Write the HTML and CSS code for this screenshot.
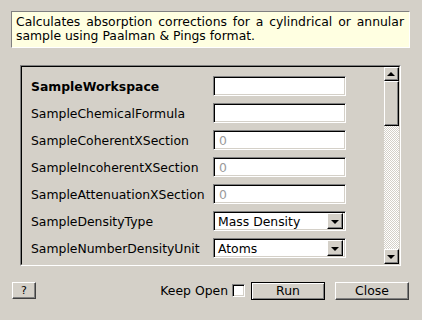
FILE: index.html
```html
<!DOCTYPE html>
<html lang="en">

<head>
    <meta charset="UTF-8">
    <title>CylinderPaalmanPingsCorrection</title>
    <link rel="stylesheet" href="styles.css">
</head>

<body>

    <div class="desc">
        <span class="justified">Calculates absorption corrections for a cylindrical or annular</span>
        <span>sample using Paalman &amp; Pings format.</span>
    </div>

    <div class="panel">
        <div class="panel-inner">
            <div class="props">
                <span class="name bold">SampleWorkspace</span>
                <span class="field"></span>

                <span class="name">SampleChemicalFormula</span>
                <span class="field"></span>

                <span class="name">SampleCoherentXSection</span>
                <span class="field hint">0</span>

                <span class="name">SampleIncoherentXSection</span>
                <span class="field hint">0</span>

                <span class="name">SampleAttenuationXSection</span>
                <span class="field hint">0</span>

                <span class="name">SampleDensityType</span>
                <span class="field combo">Mass Density<span class="drop"></span></span>

                <span class="name">SampleNumberDensityUnit</span>
                <span class="field combo">Atoms<span class="drop"></span></span>

                <span class="name"></span>
                <span class="field"></span>
            </div>

            <div class="scrollbar">
                <div class="sb-btn up"></div>
                <div class="sb-thumb"></div>
                <div class="sb-track"></div>
                <div class="sb-btn down"></div>
            </div>
        </div>
    </div>

    <div class="actions">
        <button class="btn help">?</button>
        <span class="spacer"></span>
        <label class="keep">Keep Open <span class="check"></span></label>
        <button class="btn run">Run</button>
        <button class="btn close">Close</button>
    </div>

</body>

</html>
```

FILE: styles.css
```css
body {
    margin: 0;
    width: 422px;
    height: 320px;
    background: #d4d0c8;
    font-family: "DejaVu Sans", sans-serif;
    font-size: 12.4px;
    color: #000;
    overflow: hidden;
}

.desc {
    display: flex;
    flex-direction: column;
    box-sizing: border-box;
    height: 37px;
    margin: 11px 12px 0 11px;
    padding: 3px 5px 4px 4px;
    line-height: 14px;
    background: #ffffe1;
    border: 1px solid;
    border-color: #808080 #fff #fff #808080;

    .justified {
        text-align: justify;
        text-align-last: justify;
    }
}

.panel {
    box-sizing: border-box;
    height: 201px;
    margin: 17px 21px 0 20px;
    border: 1px solid;
    border-color: #808080 #fff #fff #808080;
}

.panel-inner {
    display: flex;
    height: 100%;
    box-sizing: border-box;
    border: 1px solid;
    border-color: #000 #d4d0c8 #d4d0c8 #000;
}

.props {
    flex: 1;
    overflow: hidden;
    display: grid;
    grid-template-columns: 176px 133px;
    grid-auto-rows: 20px;
    column-gap: 6px;
    row-gap: 7px;
    align-items: center;
    align-content: start;
    padding: 9px 0 0 9px;

    .bold {
        font-weight: bold;
    }
}

.name {
    white-space: nowrap;
}

.field {
    box-sizing: border-box;
    height: 20px;
    display: flex;
    align-items: center;
    padding-left: 4px;
    background: #fff;
    border: 1px solid;
    border-color: #808080 #fff #fff #808080;
    box-shadow: inset 1px 1px 0 #000, inset -1px -1px 0 #d4d0c8;

    &.hint {
        color: #9a9a9a;
        padding-left: 5px;
    }

    &.combo {
        justify-content: space-between;
        padding: 0 2px 0 4px;
    }
}

.drop {
    box-sizing: border-box;
    width: 16px;
    height: 16px;
    display: flex;
    justify-content: center;
    align-items: center;
    background: #d4d0c8;
    border: 1px solid;
    border-color: #fff #000 #000 #fff;
    box-shadow: inset -1px -1px 0 #808080;

    &::after {
        content: "";
        border-left: 4px solid transparent;
        border-right: 4px solid transparent;
        border-top: 4px solid #000;
        margin: 1px 1px 0 0;
    }
}

.scrollbar {
    width: 15px;
    display: flex;
    flex-direction: column;
}

.sb-btn,
.sb-thumb {
    box-sizing: border-box;
    background: #d4d0c8;
    border: 1px solid;
    border-color: #fff #000 #000 #fff;
    box-shadow: inset -1px -1px 0 #808080;
}

.sb-btn {
    height: 14px;
    display: flex;
    justify-content: center;
    align-items: center;

    &::after {
        content: "";
        border-left: 4px solid transparent;
        border-right: 4px solid transparent;
        margin-right: 1px;
    }

    &.up::after {
        border-bottom: 4px solid #000;
    }

    &.down {
        height: 15px;
    }

    &.down::after {
        border-top: 4px solid #000;
    }
}

.sb-thumb {
    height: 45px;
}

.sb-track {
    flex: 1;
    background: repeating-conic-gradient(#fff 0 25%, #d4d0c8 0 50%) 0 0 / 2px 2px;
}

.actions {
    display: flex;
    align-items: center;
    height: 17px;
    margin-top: 16px;
    padding: 0 13px 0 12px;

    .spacer {
        flex: 1;
    }
}

.btn {
    box-sizing: border-box;
    height: 17px;
    padding: 0;
    font: inherit;
    color: #000;
    background: #d4d0c8;
    border: 1px solid;
    border-color: #fff #404040 #404040 #fff;
    box-shadow: inset -1px -1px 0 #808080;

    &.help {
        width: 24px;
        font-size: 11px;
    }

    &.run {
        width: 74px;
        height: 18px;
        margin-left: 6px;
        border-color: #000;
        box-shadow: inset 1px 1px 0 #fff, inset -1px -1px 0 #808080;
    }

    &.close {
        width: 74px;
        height: 18px;
        margin-left: 10px;
    }
}

.keep {
    display: flex;
    align-items: center;
    gap: 4px;
}

.check {
    box-sizing: border-box;
    width: 13px;
    height: 13px;
    background: #fff;
    border: 1px solid;
    border-color: #808080 #fff #fff #808080;
    box-shadow: inset 1px 1px 0 #000, inset -1px -1px 0 #d4d0c8;
}
```
